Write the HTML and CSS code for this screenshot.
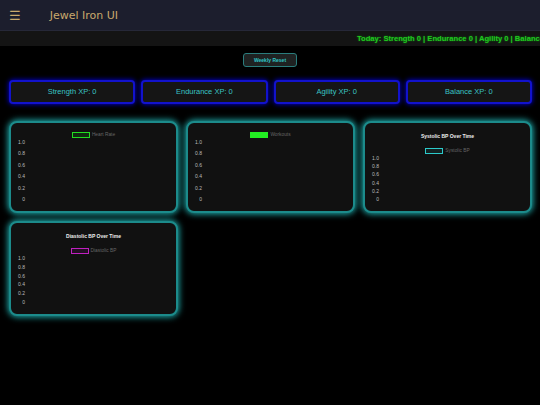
FILE: index.html
```html
<!DOCTYPE html>
<html lang="en">
<head>
    <meta charset="UTF-8">
    <meta name="viewport" content="width=device-width, initial-scale=1.0">
    <title>Jewel Iron UI</title>
    <link rel="stylesheet" href="styles.css">
</head>
<body>
    <div class="header">
        <span class="menu-icon">&#9776;</span>
        <span class="app-title">Jewel Iron UI</span>
    </div>

    <div class="ticker">Today: Strength 0 | Endurance 0 | Agility 0 | Balance 0</div>

    <div class="reset-row">
        <button class="reset-btn">Weekly Reset</button>
    </div>

    <div class="xp-row">
        <div class="xp-card">Strength XP: 0</div>
        <div class="xp-card">Endurance XP: 0</div>
        <div class="xp-card">Agility XP: 0</div>
        <div class="xp-card">Balance XP: 0</div>
    </div>

    <div class="chart-grid">
        <div class="chart-card">
            <div class="legend"><span class="swatch green-outline"></span><span class="legend-label">Heart Rate</span></div>
            <div class="axis">
                <span>1.0</span><span>0.8</span><span>0.6</span><span>0.4</span><span>0.2</span><span>0</span>
            </div>
        </div>
        <div class="chart-card">
            <div class="legend"><span class="swatch green-fill"></span><span class="legend-label">Workouts</span></div>
            <div class="axis">
                <span>1.0</span><span>0.8</span><span>0.6</span><span>0.4</span><span>0.2</span><span>0</span>
            </div>
        </div>
        <div class="chart-card">
            <div class="chart-title">Systolic BP Over Time</div>
            <div class="legend"><span class="swatch cyan-outline"></span><span class="legend-label">Systolic BP</span></div>
            <div class="axis">
                <span>1.0</span><span>0.8</span><span>0.6</span><span>0.4</span><span>0.2</span><span>0</span>
            </div>
        </div>
        <div class="chart-card tall">
            <div class="chart-title">Diastolic BP Over Time</div>
            <div class="legend"><span class="swatch magenta-outline"></span><span class="legend-label">Diastolic BP</span></div>
            <div class="axis">
                <span>1.0</span><span>0.8</span><span>0.6</span><span>0.4</span><span>0.2</span><span>0</span>
            </div>
        </div>
    </div>
</body>
</html>
```

FILE: styles.css
```css
body {
    margin: 0;
    padding: 0;
    background: #000;
    font-family: "Liberation Sans", Arial, sans-serif;
    height: 405px;
    overflow: hidden;
}

.header {
    display: flex;
    align-items: center;
    height: 30px;
    background: #1c1e2d;
    border-bottom: 1px solid #262838;
}

.menu-icon {
    color: #c9a96c;
    font-family: "DejaVu Sans", sans-serif;
    font-size: 13px;
    margin-left: 9px;
    line-height: 1;
}

.app-title {
    color: #c9a96c;
    font-family: "DejaVu Sans", sans-serif;
    font-size: 11px;
    margin-left: 29px;
}

/* daily summary strip, runs off the right edge */
.ticker {
    height: 15px;
    background: #141414;
    overflow: hidden;
    white-space: nowrap;
    padding-left: 357px;
    line-height: 15px;
    color: #20c820;
    font-weight: bold;
    font-size: 7.6px;
    text-shadow: 0 0 2px #118811;
}

.reset-row {
    display: flex;
    justify-content: center;
    padding-top: 7px;
}

.reset-btn {
    width: 54px;
    height: 14px;
    padding: 0;
    background: #1f2222;
    border: 1px solid #2a7c7c;
    border-radius: 3px;
    color: #2fc6c6;
    font-family: "Liberation Sans", Arial, sans-serif;
    font-weight: bold;
    font-size: 5px;
}

.xp-row {
    display: grid;
    grid-template-columns: repeat(4, 1fr);
    gap: 6px;
    padding: 13px 8px 0 9px;
}

.xp-card {
    height: 20px;
    line-height: 20px;
    text-align: center;
    background: #151515;
    border: 2px solid #1212cc;
    border-radius: 4px;
    box-shadow: 0 0 5px #0000ee;
    color: #3ac4c4;
    font-size: 7.5px;
}

.chart-grid {
    display: grid;
    grid-template-columns: repeat(3, 1fr);
    column-gap: 8px;
    row-gap: 8px;
    padding: 17px 8px 0 9px;
}

.chart-card {
    display: flex;
    flex-direction: column;
    background: #111;
    border: 2px solid #1c8b8b;
    border-radius: 8px;
    box-shadow: 0 0 6px 1px #1eb0b0;
    padding: 8px 0 9px 0;
    height: 71px;
}

.chart-card.tall {
    height: 74px;
}

.chart-title {
    color: #eee;
    font-weight: bold;
    font-size: 5px;
    text-align: center;
    line-height: 6px;
    margin-top: 2px;
    margin-bottom: 8px;
}

.legend {
    display: flex;
    justify-content: center;
    align-items: center;
    height: 7px;
}

.swatch {
    width: 16px;
    height: 4px;
    margin-right: 2px;
}

.green-outline {
    border: 1px solid #22dd22;
    background: #0f2a0f;
}

.green-fill {
    border: 1px solid #22ee22;
    background: #22ee22;
}

.cyan-outline {
    border: 1px solid #2ccaca;
    background: #132222;
}

.magenta-outline {
    border: 1px solid #c020c0;
    background: #221022;
}

.legend-label {
    color: #666;
    font-size: 4.8px;
}

.axis {
    flex: 1;
    display: flex;
    flex-direction: column;
    justify-content: space-between;
    width: 14px;
    margin-top: 1px;
    color: #bbb;
    font-size: 5px;
    line-height: 6px;
    text-align: right;
}
```
